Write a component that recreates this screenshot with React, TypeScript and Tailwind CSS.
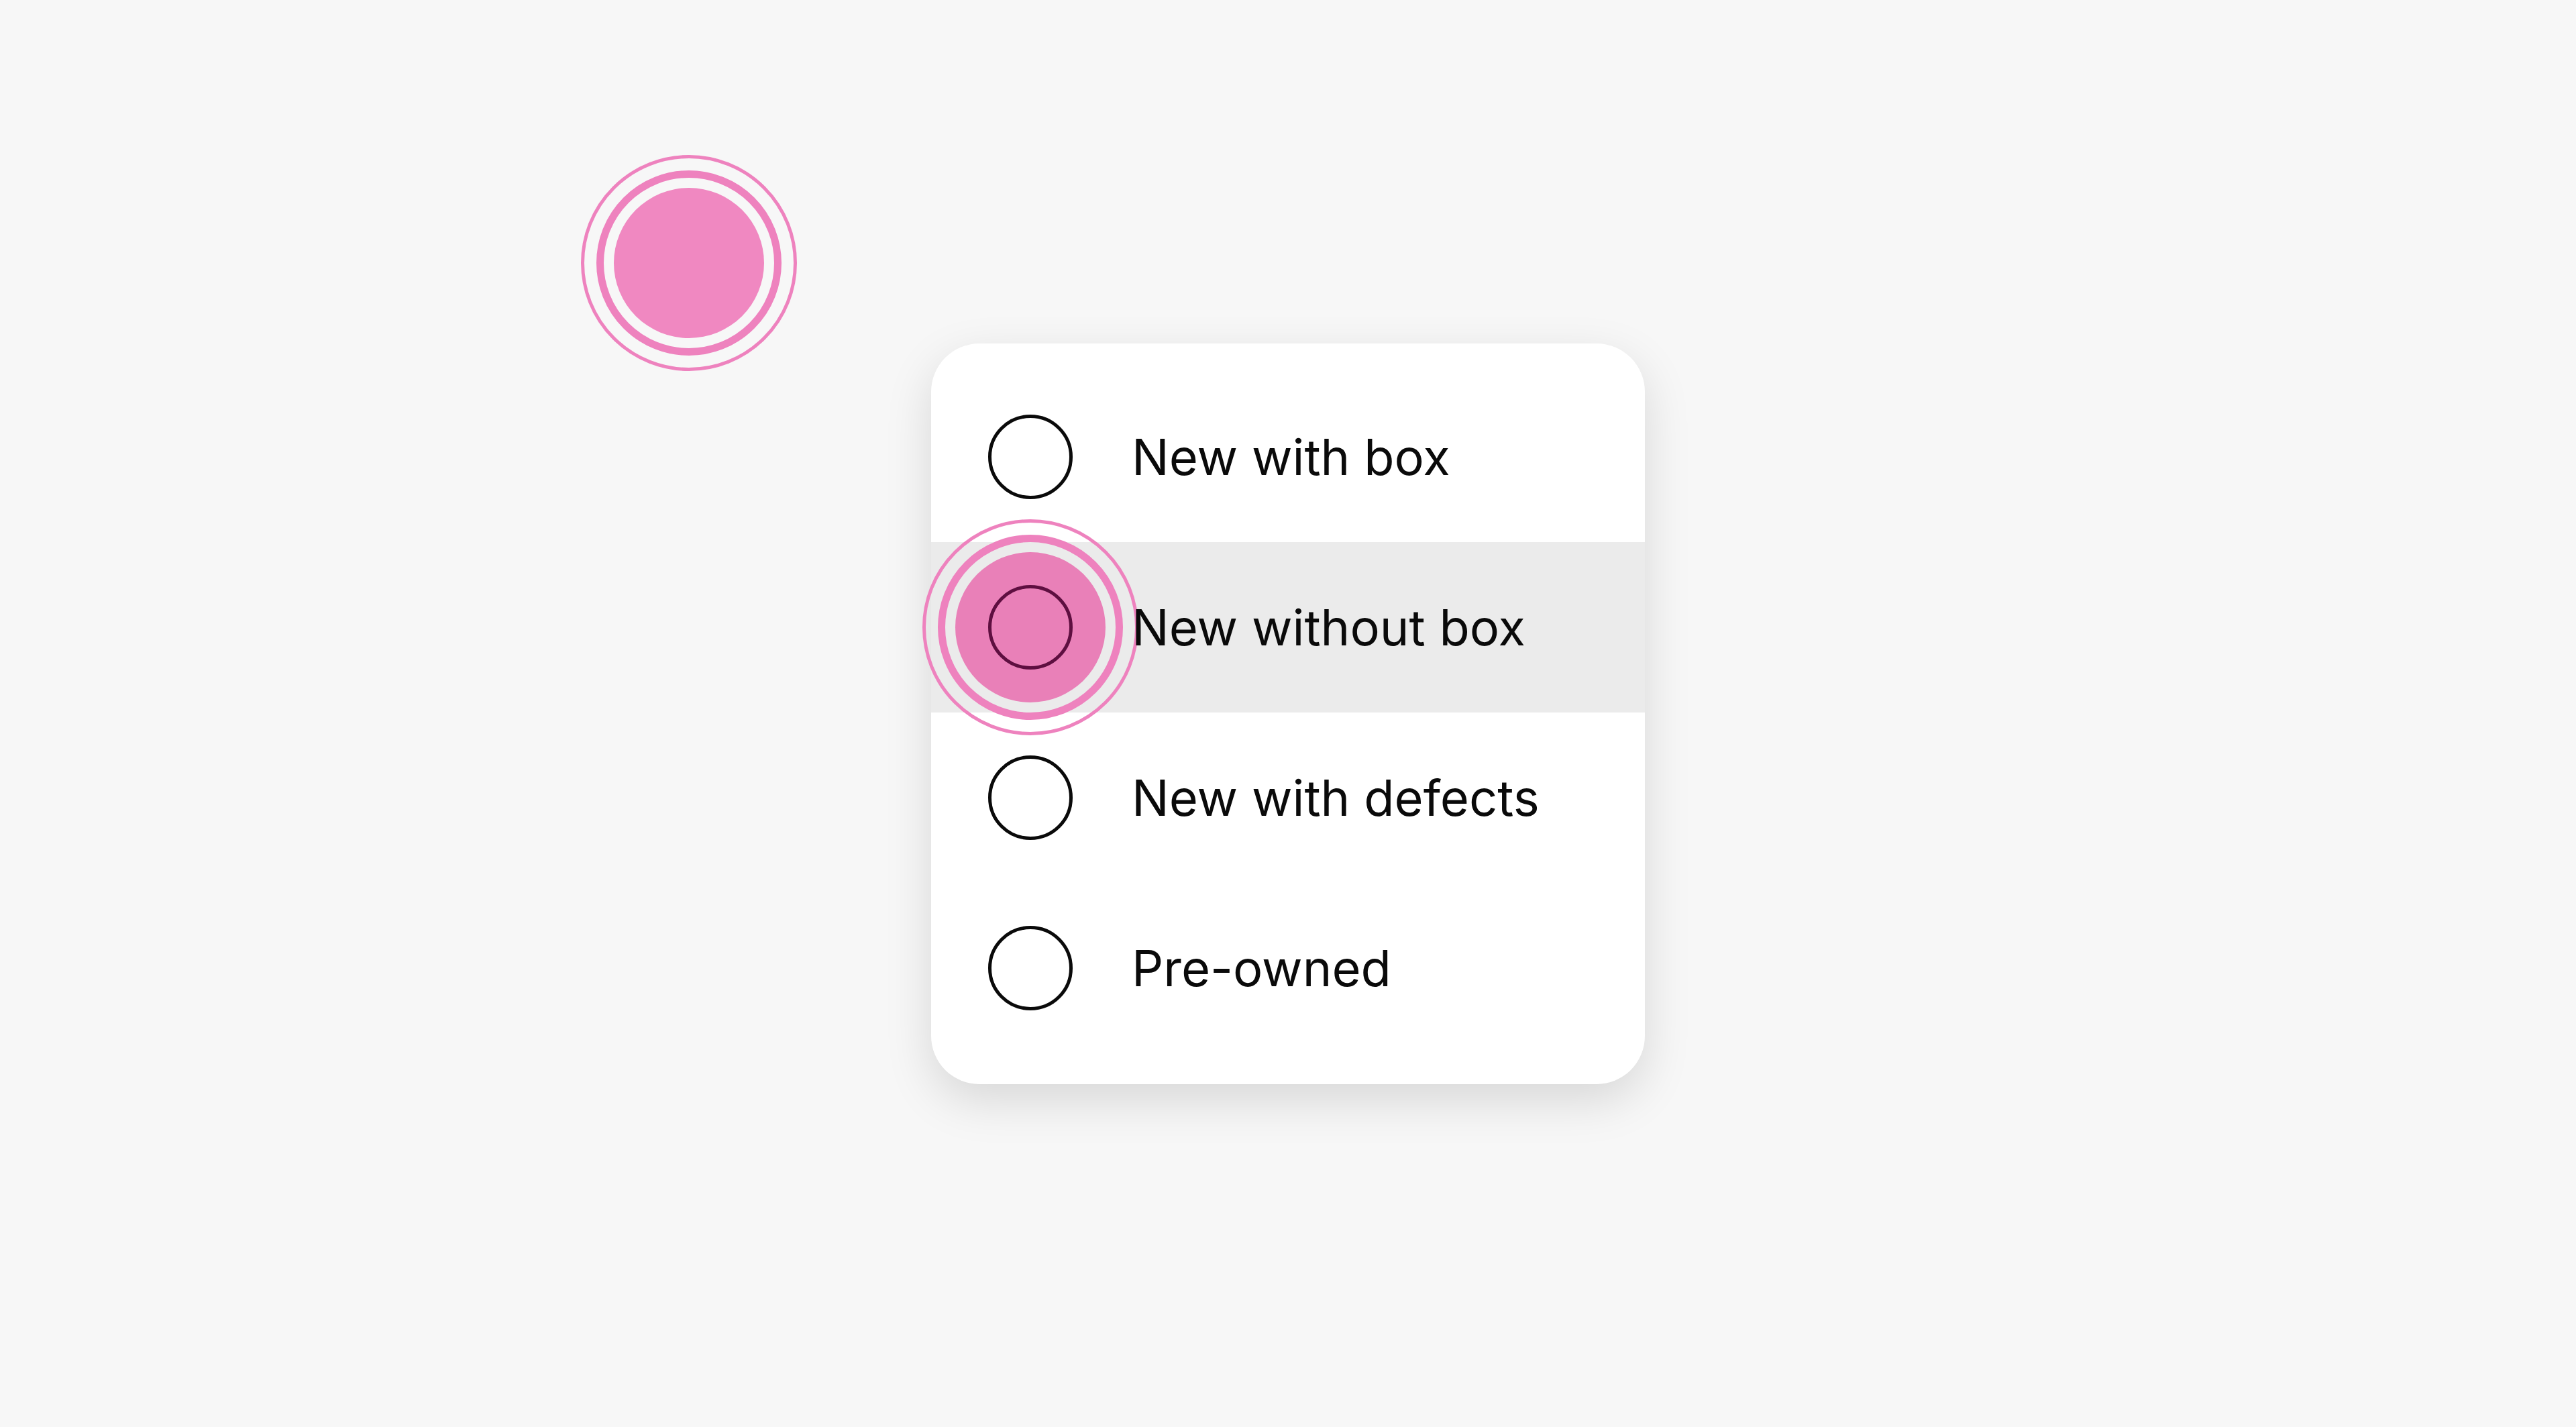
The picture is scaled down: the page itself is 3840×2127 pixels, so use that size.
import React from 'react';

const options = ['New with box', 'New without box', 'New with defects', 'Pre-owned'];

// tap indicator: filled dot with two rings around it
function Ripple({ fill }: { fill: string }) {
  return (
    <div className="relative w-[322px] h-[322px] flex items-center justify-center">
      <div className="absolute inset-0 rounded-full border-[5px] border-[#ee82be]" />
      <div className="absolute inset-[23px] rounded-full border-[11px] border-[#ee82be]" />
      <div className="w-[224px] h-[224px] rounded-full" style={{ backgroundColor: fill }} />
    </div>
  );
}

export default function App() {
  const selected = 1;

  return (
    <main
      className="relative w-full h-[2127px] bg-[#f7f7f7] flex items-center justify-center overflow-hidden"
      style={{ fontFamily: 'Inter, "Liberation Sans", sans-serif' }}
    >
      {/* floating tap indicator */}
      <div className="absolute left-[866px] top-[231px]">
        <Ripple fill="#f088c1" />
      </div>

      <div className="w-[1064px] h-[1104px] bg-white rounded-[72px] pt-[42px] pb-[46px] flex flex-col shadow-[0_24px_70px_rgba(0,0,0,0.13)]">
        {options.map((label, i) => {
          const active = i === selected;
          return (
            <div
              key={label}
              className={`h-[254px] flex items-center pl-[85px] gap-[88px] ${active ? 'bg-[#ebebeb]' : ''}`}
            >
              <div className="relative w-[126px] h-[126px] shrink-0">
                {active && (
                  <div className="absolute left-1/2 top-1/2 -translate-x-1/2 -translate-y-1/2">
                    <Ripple fill="#e980b8" />
                  </div>
                )}
                <div
                  className={`relative w-[126px] h-[126px] rounded-full border-[5px] ${
                    active ? 'border-[#5e0f40]' : 'border-[#0a0a0a]'
                  }`}
                />
              </div>
              <span className="relative text-[74px] leading-none text-[#0a0a0a]">{label}</span>
            </div>
          );
        })}
      </div>
    </main>
  );
}
